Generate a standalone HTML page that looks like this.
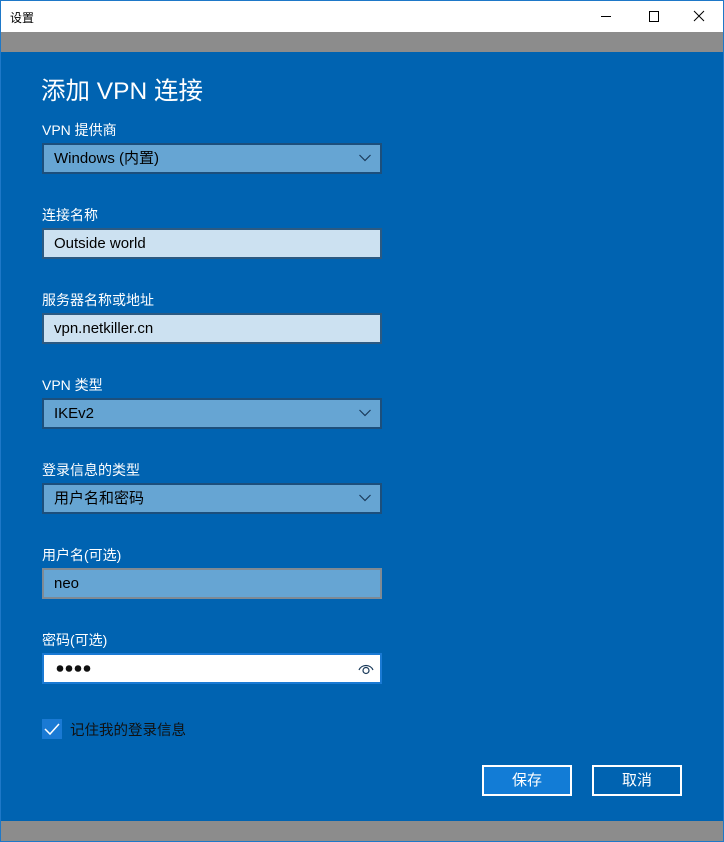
<!DOCTYPE html>
<html><head><meta charset="utf-8"><style>
*{margin:0;padding:0;box-sizing:border-box}
body{width:724px;height:842px;overflow:hidden;font-family:"Liberation Sans","Noto Sans CJK SC",sans-serif;background:#0063b1;position:relative}
.win{position:absolute;left:0;top:0;width:724px;height:842px;border:1px solid #1e78c8}
.tb{position:absolute;left:1px;top:1px;width:722px;height:31px;background:#fff;font-size:12px;color:#000}
.tb span{position:absolute;left:9px;top:8px}
.g1{position:absolute;left:1px;top:32px;width:722px;height:20px;background:#8c8c8c}
.g2{position:absolute;left:1px;top:821px;width:722px;height:20px;background:#8c8c8c}
.t{position:absolute;color:#fff}
.h{left:41px;top:72px;font-size:24.5px}
.l{left:42px;font-size:14px}
.f{position:absolute;left:42px;width:340px;height:31px;border:2px solid #2c5a82;font-size:15px;line-height:27px;color:#000;padding:0 0 0 10px;white-space:nowrap}
.dd{background:#66a5d3;border-color:#1c4f7c}
.tx{background:#cce1f1;border-color:#2c5a82}
.ch{position:absolute;right:9px;top:9px}
.btn{position:absolute;top:765px;width:90px;height:31px;border:2px solid #fff;color:#fff;font-size:15px;text-align:center;line-height:27px}
</style></head><body>
<div class="win"></div>
<div class="tb"><span>设置</span>
<svg style="position:absolute;left:430px;top:0" width="292" height="31"><line x1="170" y1="15.5" x2="180" y2="15.5" stroke="#000"/><rect x="218.5" y="10.5" width="9" height="10" fill="none" stroke="#000"/><path d="M263 10 L273 20 M273 10 L263 20" stroke="#000"/></svg></div>
<div class="g1"></div>
<div class="t h">添加 VPN 连接</div>
<div class="t l" style="top:120px">VPN 提供商</div>
<div class="f dd" style="top:143px">Windows (内置)<svg class="ch" width="12" height="8"><path d="M0.5 1 L6 6.5 L11.5 1" fill="none" stroke="#1a3a5a" stroke-width="1.2"/></svg></div>
<div class="t l" style="top:205px">连接名称</div>
<div class="f tx" style="top:228px">Outside world</div>
<div class="t l" style="top:290px">服务器名称或地址</div>
<div class="f tx" style="top:313px">vpn.netkiller.cn</div>
<div class="t l" style="top:375px">VPN 类型</div>
<div class="f dd" style="top:398px">IKEv2<svg class="ch" width="12" height="8"><path d="M0.5 1 L6 6.5 L11.5 1" fill="none" stroke="#1a3a5a" stroke-width="1.2"/></svg></div>
<div class="t l" style="top:460px">登录信息的类型</div>
<div class="f dd" style="top:483px">用户名和密码<svg class="ch" width="12" height="8"><path d="M0.5 1 L6 6.5 L11.5 1" fill="none" stroke="#1a3a5a" stroke-width="1.2"/></svg></div>
<div class="t l" style="top:545px">用户名(可选)</div>
<div class="f" style="top:568px;background:#66a5d3;border-color:#7f8a94">neo</div>
<div class="t l" style="top:630px">密码(可选)</div>
<div class="f" style="top:653px;background:#fff;border-color:#1a7ad4">
<svg style="position:absolute;left:12px;top:9px" width="40" height="9"><circle cx="4" cy="4.5" r="3.3" fill="#111"/><circle cx="13" cy="4.5" r="3.3" fill="#111"/><circle cx="22" cy="4.5" r="3.3" fill="#111"/><circle cx="31" cy="4.5" r="3.3" fill="#111"/></svg>
<svg class="ch" style="top:8px;right:6px" width="16" height="12"><path d="M1 7 A7.5 7 0 0 1 15 7" fill="none" stroke="#1a3a5a" stroke-width="1.2"/><circle cx="8" cy="7.5" r="3" fill="none" stroke="#1a3a5a" stroke-width="1.2"/></svg></div>
<div style="position:absolute;left:42px;top:719px;width:20px;height:20px;background:#1a7ad4"><svg width="20" height="20"><path d="M3 10 L8 15 L17 5" fill="none" stroke="#fff" stroke-width="1.5"/></svg></div>
<div class="t" style="left:70px;top:719px;font-size:14.5px;color:#111">记住我的登录信息</div>
<div class="btn" style="left:482px;background:#127cd6">保存</div>
<div class="btn" style="left:592px">取消</div>
<div class="g2"></div>
</body></html>
